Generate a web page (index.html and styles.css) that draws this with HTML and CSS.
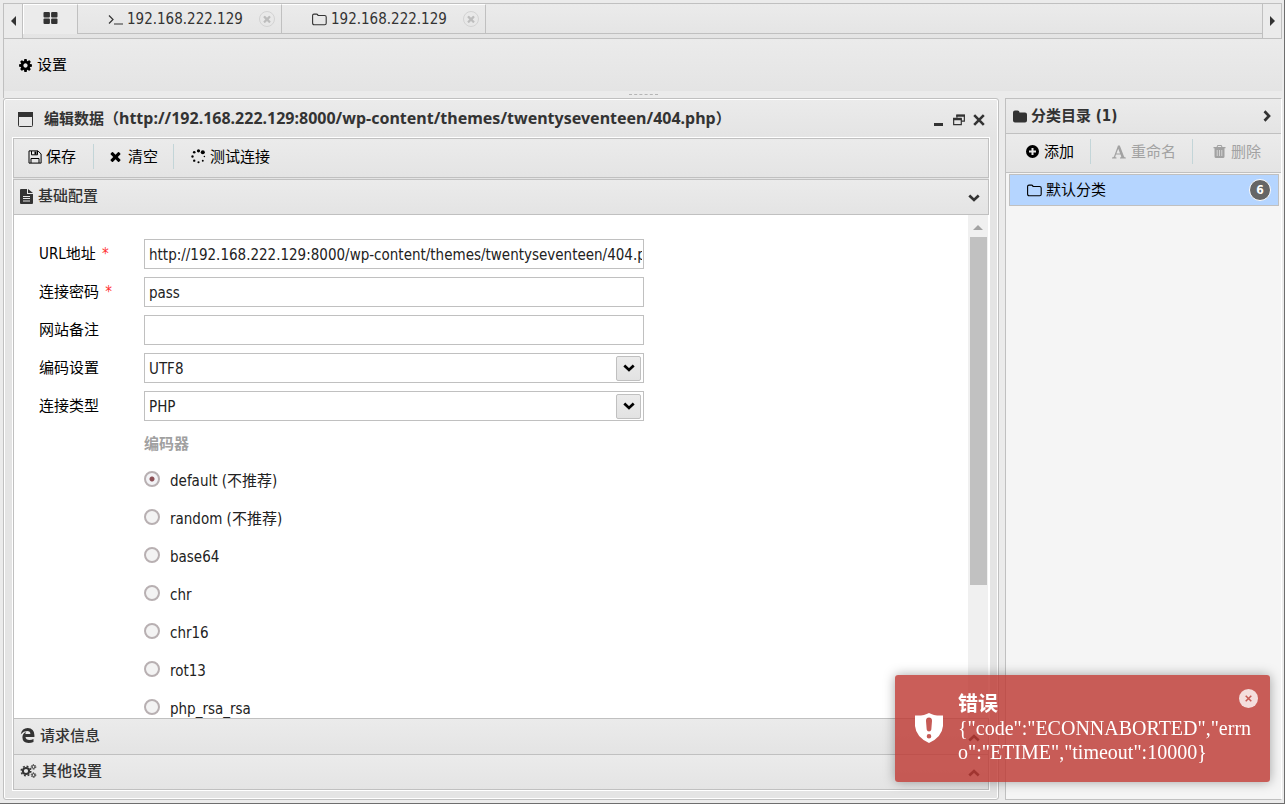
FILE: index.html
```html
<!DOCTYPE html>
<html lang="zh-CN">
<head>
<meta charset="utf-8">
<title>编辑数据</title>
<link rel="stylesheet" href="styles.css">
</head>
<body>
<svg class="sprite" aria-hidden="true">
  <symbol id="i-cog" viewBox="0 0 1792 1792"><path d="M1152 896q0-106-75-181t-181-75-181 75-75 181 75 181 181 75 181-75 75-181zm512-109v222q0 12-8 23t-20 13l-185 28q-19 54-39 91 35 50 107 138 10 12 10 25t-9 23q-27 37-99 108t-94 71q-12 0-26-9l-138-108q-44 23-91 38-16 136-29 186-7 28-36 28h-222q-14 0-24.5-8.5t-11.5-21.5l-28-184q-49-16-90-37l-141 107q-10 9-25 9-14 0-25-11-126-114-165-168-7-10-7-23 0-12 8-23 15-21 51-66.5t54-70.5q-27-50-41-99l-183-27q-13-2-21-12.5t-8-23.5v-222q0-12 8-23t19-13l186-28q14-46 39-92-40-57-107-138-10-12-10-24 0-10 9-23 26-36 98.5-107.5t94.5-71.5q13 0 26 10l138 107q44-23 91-38 16-136 29-186 7-28 36-28h222q14 0 24.5 8.5t11.5 21.5l28 184q49 16 90 37l142-107q9-9 24-9 13 0 25 10 129 119 165 170 7 8 7 22 0 12-8 23-15 21-51 66.5t-54 70.5q26 50 41 98l183 28q13 2 21 12.5t8 23.5z"/></symbol>
  <symbol id="i-times" viewBox="240 240 1310 1310"><path d="M1490 1322q0 40-28 68l-136 136q-28 28-68 28t-68-28l-294-294-294 294q-28 28-68 28t-68-28l-136-136q-28-28-28-68t28-68l294-294-294-294q-28-28-28-68t28-68l136-136q28-28 68-28t68 28l294 294 294-294q28-28 68-28t68 28l136 136q28 28 28 68t-28 68l-294 294 294 294q28 28 28 68z"/></symbol>
  <symbol id="i-grid" viewBox="0 0 14 12"><rect width="6.4" height="5.4" rx="1"/><rect x="7.6" width="6.4" height="5.4" rx="1"/><rect y="6.6" width="6.4" height="5.4" rx="1"/><rect x="7.6" y="6.6" width="6.4" height="5.4" rx="1"/></symbol>
  <symbol id="i-term" viewBox="0 0 15 14"><path d="M1 3l4 4-4 4M6 11.5h9" fill="none" stroke="currentColor" stroke-width="1.2"/></symbol>
  <symbol id="i-folder-o" viewBox="0 0 15 14"><path d="M.6 10.500V3Q.6 1.600 2 1.600H4.600Q6 1.600 6 3H12.600Q14.200 3 14.200 4.500V10.700Q14.200 12.200 12.700 12.200H2.100Q.6 12.200.6 10.500Z" fill="none" stroke="currentColor" stroke-width="1.100"/></symbol>
  <symbol id="i-folder" viewBox="0 0 15 14"><path d="M0 3Q0 1 2 1H4.500Q6.500 1 6.500 3H12Q14 3 14 5V11Q14 13 12 13H2Q0 13 0 11Z"/></symbol>
  <symbol id="i-window" viewBox="0 0 15 15"><path d="M1.500.5h12q1 0 1 1v12q0 1-1 1h-12q-1 0-1-1v-12q0-1 1-1z" fill="none" stroke="currentColor"/><path d="M0 0h15v5H0z"/></symbol>
  <symbol id="i-save" viewBox="0 0 14 14"><path d="M1 .9H10L13.100 4V13.100H1zM3.500 1V4.800H9.500V1M3 13V8.500H11V13" fill="none" stroke="currentColor" stroke-width="1"/><path d="M6.500 1.500h2v3h-2z"/></symbol>
  <symbol id="i-spin" viewBox="0 0 14 14"><circle cx="7" cy="1.700" r="1.500"/><circle cx="11" cy="3" r="1.900"/><circle cx="12.500" cy="7" r=".7"/><circle cx="11" cy="10.900" r=".9"/><circle cx="7" cy="12.400" r="1"/><circle cx="3" cy="10.900" r="1.100"/><circle cx="1.400" cy="7" r="1.100"/><circle cx="3" cy="3" r="1.200"/></symbol>
  <symbol id="i-file" viewBox="0 0 13 15"><path fill-rule="evenodd" d="M1 0H7V5H13V14Q13 15 12 15H1Q0 15 0 14V1Q0 0 1 0zM8 0L13 4H8zM3 7V8H10V7zM3 9V10H10V9zM3 11.500V12.500H10V11.500z"/></symbol>
  <symbol id="i-edge" viewBox="0 0 14 15"><path d="M.2 6.300Q1.600 0 7.200 0 13.700.4 13.900 7V9H5Q5.300 12 9 12.100 11.200 12.100 13 11V13.900Q10.800 15 8 15 2 14.800 1.900 9.300 2 5.500 5.600 3.700 4.900 4.800 4.900 6H9.900Q9.900 3.200 6.700 3.100 3 3.200.2 6.300Z"/></symbol>
  <symbol id="i-gears" viewBox="0 0 16 14"><circle cx="5.500" cy="7" r="3.100" fill="none" stroke="currentColor" stroke-width="2"/><circle cx="5.500" cy="7" r="4.800" fill="none" stroke="currentColor" stroke-width="1.500" stroke-dasharray="1.900 1.870"/><g fill="none" stroke="currentColor"><circle cx="13" cy="2.900" r="1.500"/><circle cx="13" cy="11.100" r="1.500"/><g stroke-dasharray="1.200 1.070"><circle cx="13" cy="2.900" r="2.300"/><circle cx="13" cy="11.100" r="2.300"/></g></g></symbol>
  <symbol id="i-chev" viewBox="0 0 12 8"><path d="M1.300 1.500L6 6 10.700 1.500" fill="none" stroke="currentColor" stroke-width="2.700"/></symbol>
  <symbol id="i-plus" viewBox="0 0 13 13"><path fill-rule="evenodd" d="M6.500 0a6.500 6.500 0 1 1 0 13 6.500 6.500 0 1 1 0-13zM5.500 3V5.500H3V7.500H5.500V10H7.500V7.500H10V5.500H7.500V3z"/></symbol>
  <symbol id="i-font" viewBox="0 0 14 13"><path fill-rule="evenodd" d="M6 0H7.800L12 11Q12.300 12 13.800 12V13H8V12Q9.600 12 9.200 11L8.600 9H4L3.300 11Q3 12 4.500 12V13H0V12Q1.500 12 2 11ZM6.300 3.200L4.400 8H8.100Z"/></symbol>
  <symbol id="i-trash" viewBox="0 0 12 13"><path fill-rule="evenodd" d="M4 0H8L9 2H12V3.200H11V11.500Q11 13 9.500 13H2.500Q1 13 1 11.500V3.200H0V2H3ZM4.500 1L4.200 2H7.800L7.500 1ZM3.300 5V11H4V5ZM5.700 5V11H6.400V5ZM8 5V11H8.700V5Z"/></symbol>
  <symbol id="i-min" viewBox="0 0 10 12"><path d="M0 9h9v3H0z"/></symbol>
  <symbol id="i-restore" viewBox="0 0 11 10"><path d="M3.600 3V.7H10.400V6H8M.6 4h7v5.200h-7z" fill="none" stroke="currentColor" stroke-width="1.100"/><path d="M3 0h8v2H3zM0 3h8v2.200H0z"/></symbol>
  <symbol id="i-x" viewBox="0 0 12 12"><path d="M1.200 1.200l9.600 9.600M10.800 1.200L1.200 10.800" fill="none" stroke="currentColor" stroke-width="2.600"/></symbol>
  <symbol id="i-shield" viewBox="0 0 28 30"><path fill-rule="evenodd" d="M14 0Q19 3 28 2.500V13Q27 24 14 30 1 24 0 13V2.500Q9 3 14 0zM14 4.500Q10.800 4.500 11 8L11.700 16.500Q12 18.500 14 18.500T16.300 16.500L17 8Q17.200 4.500 14 4.500zM14 21a2.300 2.300 0 1 0 0 4.600 2.300 2.300 0 1 0 0-4.600z"/></symbol>
</svg>

<nav class="tabbar">
  <button class="scroll-btn" aria-label="向左"><span class="tri tri-left"></span></button>
  <div class="tabs">
    <button class="tab tab-home active" aria-label="主页"><svg class="ic-grid"><use href="#i-grid"/></svg></button>
    <div class="tab"><svg class="ic15"><use href="#i-term"/></svg><span>192.168.222.129</span><button class="tab-close" aria-label="关闭"><svg><use href="#i-times"/></svg></button></div>
    <div class="tab"><svg class="ic15"><use href="#i-folder-o"/></svg><span>192.168.222.129</span><button class="tab-close" aria-label="关闭"><svg><use href="#i-times"/></svg></button></div>
  </div>
  <button class="scroll-btn scroll-next" aria-label="向右"><span class="tri tri-right"></span></button>
</nav>
<header class="settings"><button class="tool"><svg class="ic15"><use href="#i-cog"/></svg>设置</button></header>
<div class="splitter"><span></span></div>

<main class="main">
  <section class="window">
    <div class="win-head">
      <svg class="ic15"><use href="#i-window"/></svg>
      <h1>编辑数据（<span class="url">http://192.168.222.129:8000/wp-content/themes/twentyseventeen/404.php</span>）</h1>
      <div class="win-btns">
        <button aria-label="最小化"><svg><use href="#i-min"/></svg></button>
        <button aria-label="还原"><svg><use href="#i-restore"/></svg></button>
        <button aria-label="关闭"><svg><use href="#i-x"/></svg></button>
      </div>
    </div>
    <div class="win-body">
      <div class="toolbar boxed">
        <button class="tool save"><svg class="ic14"><use href="#i-save"/></svg>保存</button>
        <button class="tool clear"><svg class="ic11"><use href="#i-times"/></svg>清空</button>
        <button class="tool test"><svg class="ic15"><use href="#i-spin"/></svg>测试连接</button>
      </div>
      <button class="section open"><svg class="ic-file"><use href="#i-file"/></svg><span>基础配置</span><svg class="chev"><use href="#i-chev"/></svg></button>
      <div class="scroll-area">
        <form class="form">
          <div class="row"><label for="url">URL地址 <em>*</em></label><input id="url" type="text" value="http://192.168.222.129:8000/wp-content/themes/twentyseventeen/404.php"></div>
          <div class="row"><label for="pwd">连接密码 <em>*</em></label><input id="pwd" type="text" value="pass"></div>
          <div class="row"><label for="note">网站备注</label><input id="note" type="text"></div>
          <div class="row"><label for="enc">编码设置</label><div class="combo"><select id="enc"><option>UTF8</option></select><span class="combo-btn"><svg><use href="#i-chev"/></svg></span></div></div>
          <div class="row"><label for="type">连接类型</label><div class="combo"><select id="type"><option>PHP</option></select><span class="combo-btn"><svg><use href="#i-chev"/></svg></span></div></div>
          <fieldset class="encoders">
            <legend>编码器</legend>
            <label><input type="radio" name="e" checked><span>default (不推荐)</span></label>
            <label><input type="radio" name="e"><span>random (不推荐)</span></label>
            <label><input type="radio" name="e"><span>base64</span></label>
            <label><input type="radio" name="e"><span>chr</span></label>
            <label><input type="radio" name="e"><span>chr16</span></label>
            <label><input type="radio" name="e"><span>rot13</span></label>
            <label><input type="radio" name="e"><span>php_rsa_rsa</span></label>
          </fieldset>
        </form>
        <div class="track"><span class="tri tri-up"></span><div class="thumb"></div></div>
      </div>
      <button class="section"><svg class="ic15"><use href="#i-edge"/></svg><span>请求信息</span><svg class="chev up"><use href="#i-chev"/></svg></button>
      <button class="section"><svg class="ic-gears"><use href="#i-gears"/></svg><span>其他设置</span><svg class="chev up"><use href="#i-chev"/></svg></button>
    </div>
  </section>

  <aside class="side">
    <div class="side-head"><svg class="ic15"><use href="#i-folder"/></svg><h2>分类目录 (1)</h2><button aria-label="收起"><svg class="chev right"><use href="#i-chev"/></svg></button></div>
    <div class="toolbar side-tools">
      <button class="tool add"><svg class="ic13"><use href="#i-plus"/></svg>添加</button>
      <button class="tool rename" disabled><svg class="ic14"><use href="#i-font"/></svg>重命名</button>
      <button class="tool remove" disabled><svg class="ic13"><use href="#i-trash"/></svg>删除</button>
    </div>
    <a class="category" href="#"><svg class="ic15"><use href="#i-folder-o"/></svg><span>默认分类</span><b>6</b></a>
  </aside>
</main>

<div class="toast" role="alert">
  <svg class="shield"><use href="#i-shield"/></svg>
  <div class="toast-text"><strong>错误</strong><p>{"code":"ECONNABORTED","errno":"ETIME","timeout":10000}</p></div>
  <button aria-label="关闭"><svg><use href="#i-x"/></svg></button>
</div>
</body>
</html>
```
FILE: styles.css
```css
* { box-sizing: border-box; }
body {
  margin: 0;
  height: 100vh;
  padding: 3px 2px 3px 3px;
  display: flex;
  flex-direction: column;
  overflow: hidden;
  background: #ebebeb;
  border-right: 1px solid #6e6e6e;
  border-bottom: 1px solid #6e6e6e;
  color: #000;
  font: 15px/20px "DejaVu Sans Condensed", "Noto Sans", "Noto Sans CJK SC", sans-serif;
}
button, input, select { font: inherit; color: inherit; margin: 0; }
button { padding: 0; border: 0; background: none; }
svg { display: block; flex: none; fill: currentColor; }
.sprite { position: absolute; width: 0; height: 0; }
h1, h2, p { margin: 0; font-size: 15px; }
h1 { font-family: "Noto Sans", "Noto Sans CJK SC", sans-serif; }
.url { font-size: 16px; }
.ic15 { width: 15px; height: 15px; }
.ic14 { width: 14px; height: 14px; }
.ic13 { width: 13px; height: 13px; }
.ic11 { width: 11px; height: 11px; }

.tabbar {
  display: flex;
  height: 36px;
  flex: none;
  border: 1px solid #c0c0c0;
  background: linear-gradient(#ebebeb, #e4e4e4);
}
.scroll-btn { width: 19px; border-right: 1px solid #c0c0c0; display: grid; place-items: center; background: #ebebeb; }
.scroll-next { border-right: 0; border-left: 1px solid #c0c0c0; }
.tri { border: 5px solid transparent; }
.tri-left { border-right-color: #333; border-left: 0; }
.tri-right { border-left-color: #333; border-right: 0; }
.tri-up { border-bottom-color: #a3a3a3; border-top: 0; }
.tabs { flex: 1; display: flex; height: 30px; border-bottom: 1px solid #c0c0c0; }
.tab {
  width: 204px;
  padding: 0 6px 0 30px;
  display: flex;
  align-items: center;
  gap: 4px;
  color: #333;
  border-right: 1px solid #c0c0c0;
  border-top: 1px solid #fff;
}
.tab-home { width: 55px; height: 30px; padding: 0; justify-content: center; background: #ebebeb; border-left: 1px solid #fff; }
.tab-home .ic-grid { width: 15px; height: 12px; margin-bottom: 3px; }
.tab-close { width: 16px; height: 16px; margin-left: auto; border: 1px solid #d3d3d3; border-radius: 8px; display: grid; place-items: center; color: #bdbdbd; }
.tab-close svg { width: 8px; height: 8px; }

.settings { height: 52px; flex: none; padding-left: 14px; display: flex; align-items: center; border-left: 1px solid #c0c0c0; background: linear-gradient(#ebebeb, #e4e4e4); }
.tool { display: flex; align-items: center; gap: 4px; }
.splitter { height: 7px; flex: none; display: flex; justify-content: center; border-left: 1px solid #c0c0c0; }
.splitter span { width: 29px; height: 4px; border-bottom: 1px dashed #b5b5b5; }

.main { flex: 1; min-height: 0; display: flex; gap: 6px; }
.window {
  flex: 1;
  min-width: 0;
  display: flex;
  flex-direction: column;
  padding: 0 8px 8px;
  border: 1px solid #c0c0c0;
  border-radius: 3px;
  box-shadow: inset 0 0 0 1px #fff;
  background: #e4e4e4 linear-gradient(#ebebeb, #e4e4e4) top / 100% 38px no-repeat;
}
.win-head { height: 38px; flex: none; padding: 3px 5px 0 6px; display: flex; align-items: center; gap: 11px; color: #333; }
.win-head h1 { flex: 1; padding-bottom: 3px; white-space: nowrap; overflow: hidden; }
.win-btns { display: flex; gap: 8px; align-items: center; }
.win-btns svg { width: 12px; height: 12px; }
.win-body { flex: 1; min-height: 0; display: flex; flex-direction: column; border: 1px solid #fff; }
.toolbar { display: flex; flex: none; align-items: center; background: linear-gradient(#ebebeb, #e4e4e4); }
.boxed { height: 40px; padding-bottom: 3px; border: 1px solid #c0c0c0; }
.toolbar .tool { height: 25px; }
.toolbar .tool + .tool { border-left: 1px solid #c3d5d8; }
.save { width: 79px; padding-left: 14px; }
.clear { width: 80px; padding-left: 16px; }
.clear.tool { gap: 7px; }
.test { padding-left: 17px; }
.section {
  height: 36px;
  flex: none;
  padding: 0 8px 2px 6px;
  display: flex;
  align-items: center;
  gap: 5px;
  border: 1px solid #c0c0c0;
  border-bottom: 0;
  background: linear-gradient(#ebebeb, #e4e4e4);
  color: #333;
  font-weight: 500;
}
.section:last-child { border-bottom: 1px solid #c0c0c0; }
.section.open { margin-top: 1px; border-bottom: 1px solid #c0c0c0; }
.ic-file { width: 13px; height: 15px; }
.ic-gears { width: 17px; height: 14px; }
.chev { width: 12px; height: 8px; }
.section .chev { margin: 4px 0 0 auto; }
.up { transform: rotate(180deg); }
.right { transform: rotate(-90deg); }
.scroll-area { flex: 1; min-height: 0; display: flex; overflow: hidden; background: #fff; border-left: 1px solid #c0c0c0; }
.form { flex: 1; padding: 24px 0 0 25px; display: flex; flex-direction: column; gap: 8px; }
.row { display: flex; }
.row > label { width: 105px; flex: none; line-height: 30px; }
.row em { color: #f33; font-style: normal; margin-left: 2px; }
.row input, .row select {
  width: 100%;
  max-width: 500px;
  height: 30px;
  padding: 2px 1px 0 4px;
  border: 1px solid #c0c0c0;
  border-radius: 0;
  background: #fff;
  color: #222;
}
.combo { width: 100%; max-width: 500px; display: grid; align-items: center; }
.combo > * { grid-area: 1 / 1; }
.combo select { appearance: none; }
.combo-btn { justify-self: end; width: 25px; height: 25px; margin-right: 3px; display: grid; place-items: center; border: 1px solid #c0c0c0; border-radius: 2px; background: linear-gradient(#ebebeb, #e2e2e2); pointer-events: none; }
.combo-btn svg { width: 12px; height: 8px; }
.encoders { margin: 0 0 0 105px; padding: 0; border: 0; }
.encoders legend { padding: 0; line-height: 30px; font-weight: bold; color: #a0a0a0; }
.encoders label { display: flex; align-items: center; gap: 9px; height: 38px; color: #222; }
.encoders label:first-of-type { margin-top: 3px; }
.encoders input {
  appearance: none;
  width: 16px;
  height: 16px;
  margin: 0 1px 4px 0;
  border: 2px solid #b8b0b2;
  border-radius: 8px;
  background: #f3f3f3;
}
.encoders input:checked { background: radial-gradient(#8c5056 2px, #f3f3f6 3px); }
.track { width: 21px; padding: 10px 2px 0; display: flex; flex-direction: column; align-items: center; gap: 7px; background: #f0f0f0; border-right: 1px solid #fff; }
.thumb { width: 17px; height: 348px; background: #c1c1c1; }

.side { width: 277px; flex: none; display: flex; flex-direction: column; background: #f5f5f5; border: 1px solid #c0c0c0; border-right-color: #fff; }
.side-head { height: 35px; padding: 0 8px 0 7px; display: flex; align-items: center; gap: 3px; color: #333; background: linear-gradient(#ebebeb, #e4e4e4); border-bottom: 1px solid #c0c0c0; }
.side-head h2 { flex: 1; }
.side-tools { height: 39px; padding-bottom: 3px; border-bottom: 1px solid #c0c0c0; }
.side-tools .tool { gap: 5px; }
.add { width: 84px; padding-left: 20px; }
.rename { width: 102px; padding-left: 21px; }
.remove { padding-left: 20px; }
.tool:disabled { color: #a2a2a2; }
.category { height: 32px; margin: 1px 2px 0 3px; padding: 0 7px 0 17px; display: flex; align-items: center; gap: 4px; color: #000; background: #b5d5ff; border: 1px solid #c0c0c0; text-decoration: none; }
.category b { width: 22px; height: 22px; margin-left: auto; border: 1px solid #fff; border-radius: 11px; background: #666; color: #fff; font-size: 12px; line-height: 20px; text-align: center; }

.toast {
  position: fixed;
  right: 15px;
  bottom: 22px;
  width: 375px;
  padding: 17px 12px 18px 20px;
  display: flex;
  gap: 15px;
  border-radius: 3px;
  background: rgba(189, 54, 47, .8);
  box-shadow: 0 0 12px rgba(0, 0, 0, .35);
  color: #fff;
  font: 20px/24px "Liberation Serif", "Noto Sans CJK SC", serif;
}
.shield { width: 28px; height: 30px; align-self: center; }
.toast-text { flex: 1; min-width: 0; margin-right: -30px; }
.toast p { font-size: 20px; word-break: break-all; }
.toast strong { display: block; }
.toast button { flex: none; width: 19px; height: 19px; margin-top: -3px; border-radius: 10px; display: grid; place-items: center; background: rgba(255, 255, 255, .8); color: #c75b55; }
.toast button svg { width: 7px; height: 7px; }
```
